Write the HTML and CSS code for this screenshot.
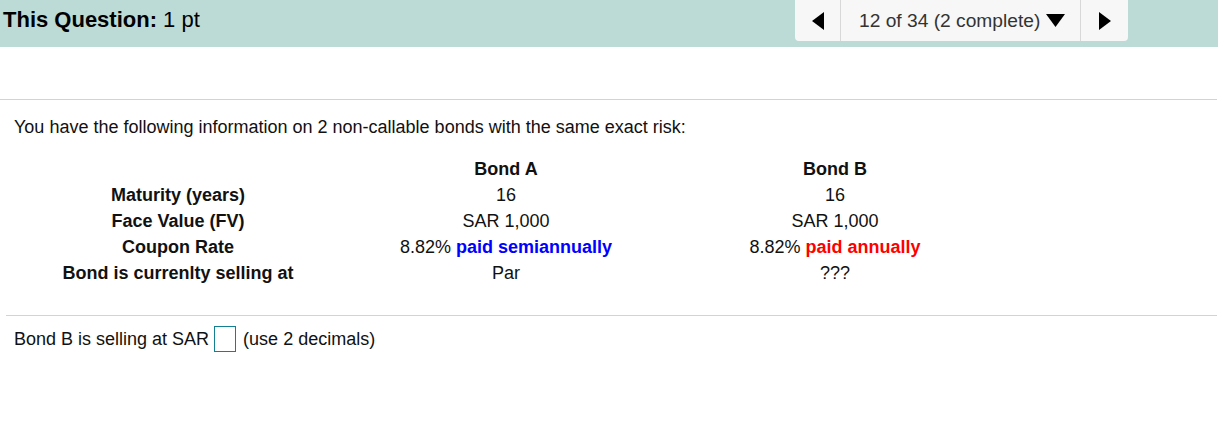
FILE: index.html
```html
<!DOCTYPE html>
<html>
<head>
<meta charset="utf-8">
<link rel="stylesheet" href="styles.css">
</head>
<body>
<header class="topbar">
  <div class="title"><b>This Question:</b> 1 pt</div>
  <nav class="nav">
    <div class="nav-btn">
      <svg width="12" height="18" viewBox="0 0 12 18"><polygon points="12,0 12,18 0,9" fill="#000"/></svg>
    </div>
    <div class="nav-mid">
      <span>12 of 34 (2 complete)</span>
      <svg width="19" height="13" viewBox="0 0 19 13"><polygon points="0,0 19,0 9.5,13" fill="#000"/></svg>
    </div>
    <div class="nav-btn">
      <svg width="12" height="18" viewBox="0 0 12 18"><polygon points="0,0 12,9 0,18" fill="#000"/></svg>
    </div>
  </nav>
</header>
<main class="content">
  <div class="question">
    <p class="intro">You have the following information on 2 non-callable bonds with the same exact risk:</p>
    <div class="bonds">
      <div class="lbl"></div><div class="col-a hd">Bond A</div><div class="col-b hd">Bond B</div>
      <div class="lbl">Maturity (years)</div><div class="col-a">16</div><div class="col-b">16</div>
      <div class="lbl">Face Value (FV)</div><div class="col-a">SAR 1,000</div><div class="col-b">SAR 1,000</div>
      <div class="lbl">Coupon Rate</div><div class="col-a">8.82% <b class="blue">paid semiannually</b></div><div class="col-b">8.82% <b class="red">paid annually</b></div>
      <div class="lbl">Bond is currenlty selling at</div><div class="col-a">Par</div><div class="col-b">???</div>
    </div>
  </div>
  <div class="answer">
    <span>Bond B is selling at SAR</span><span class="input"></span><span class="hint">(use 2 decimals)</span>
  </div>
</main>
</body>
</html>
```
FILE: styles.css
```css
* { box-sizing: border-box; }
html, body { margin: 0; padding: 0; background: #fff; }
body { font-family: "Liberation Sans", Arial, sans-serif; color: #111; font-size: 18px; }

.topbar {
  height: 47px;
  background: #bcdad6;
  display: flex;
  align-items: flex-start;
  justify-content: space-between;
  padding-left: 3px;
  padding-right: 90px;
}
.title {
  font-size: 22px;
  line-height: 24px;
  padding-top: 8px;
  color: #000;
}
.nav {
  display: flex;
  height: 41px;
  background: #f7f7f7;
  border-radius: 0 0 4px 4px;
  width: 333px;
}
.nav-btn {
  width: 45px;
  display: flex;
  align-items: center;
  justify-content: center;
}
.nav-btn:last-child { width: 47px; }
.nav-mid {
  flex: 1;
  display: flex;
  align-items: center;
  gap: 6px;
  padding-left: 18px;
  border-left: 1px solid #d8d8d8;
  border-right: 1px solid #d8d8d8;
  font-size: 19.2px;
  color: #333;
}

.content { padding-top: 52px; }
.question {
  border-top: 1px solid #cfd3dc;
  padding: 17px 0 29px 14px;
  border-bottom: 1px solid #cfd3dc;
  margin-left: 6px;
  margin-right: 1px;
  position: relative;
}
.question::before {
  content: "";
  position: absolute;
  top: -1px;
  left: -6px;
  width: 6px;
  height: 1px;
  background: #cfd3dc;
}
.intro { margin: 0 0 19px -6px; line-height: 20px; }
.bonds {
  display: grid;
  grid-template-columns: 256px 400px 258px;
  grid-auto-rows: 26px;
  align-items: center;
  margin-left: 30px;
  line-height: 20px;
}
.bonds > div { text-align: center; white-space: nowrap; }
.bonds .lbl { font-weight: bold; }
.bonds .hd { font-weight: bold; }
.blue { color: #0000ff; }
.red { color: #ff0000; }

.answer {
  display: flex;
  align-items: center;
  padding: 10px 0 0 14px;
  gap: 5px;
  line-height: 26px;
  font-size: 18px;
}
.hint { margin-left: 2px; }
.input {
  display: inline-block;
  width: 22px;
  height: 26px;
  border: 1px solid #127f93;
  background: #fff;
}
```
